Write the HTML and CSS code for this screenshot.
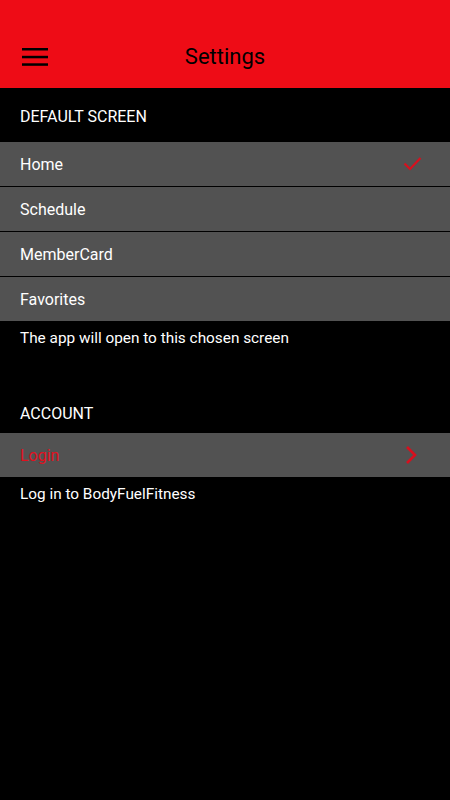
FILE: index.html
```html
<!DOCTYPE html>
<html>
<head>
<meta charset="utf-8">
<link rel="stylesheet" href="styles.css">
</head>
<body>
<div class="app">
  <header class="topbar">
    <div class="menu">
      <svg width="26" height="20" viewBox="0 0 26 20"><rect x="0" y="1" width="26" height="2.5" fill="#000"/><rect x="0" y="8.8" width="26" height="2.5" fill="#000"/><rect x="0" y="16.3" width="26" height="2.5" fill="#000"/></svg>
    </div>
    <div class="title">Settings</div>
  </header>
  <div class="section-title">DEFAULT SCREEN</div>
  <div class="list">
    <div class="row"><span>Home</span>
      <svg class="check" width="20" height="16" viewBox="0 0 20 16"><path d="M1.5 7.5 L7 13 L17.5 2" fill="none" stroke="#d8101e" stroke-width="2.2"/></svg>
    </div>
    <div class="row"><span>Schedule</span></div>
    <div class="row"><span>MemberCard</span></div>
    <div class="row"><span>Favorites</span></div>
  </div>
  <div class="note">The app will open to this chosen screen</div>
  <div class="section-title account">ACCOUNT</div>
  <div class="list">
    <div class="row login"><span>Login</span>
      <svg class="chev" width="14" height="20" viewBox="0 0 14 20"><path d="M2 2 L10 10 L2 18" fill="none" stroke="#d8101e" stroke-width="2.6"/></svg>
    </div>
  </div>
  <div class="note">Log in to BodyFuelFitness</div>
</div>
</body>
</html>
```
FILE: styles.css
```css
html, body {
  margin: 0;
  padding: 0;
  background: #000;
}
body {
  font-family: Roboto, "Noto Sans", sans-serif;
  color: #fff;
  width: 450px;
  height: 800px;
  overflow: hidden;
}
.topbar {
  height: 88px;
  background: #ee0c16;
  position: relative;
  display: flex;
  align-items: flex-end;
  justify-content: center;
  box-sizing: border-box;
  padding-bottom: 17px;
}
.menu {
  position: absolute;
  left: 22px;
  top: 47px;
  height: 20px;
}
.menu svg { display: block; }
.title {
  color: #000;
  font-size: 22px;
  line-height: 28px;
}
.section-title {
  font-size: 16px;
  line-height: 20px;
  padding: 19px 20px 15px 20px;
}
.section-title.account {
  padding-top: 0;
  margin-top: 56px;
  padding-bottom: 9px;
}
.list {
  display: flex;
  flex-direction: column;
}
.row {
  background: #525252;
  height: 44px;
  display: flex;
  align-items: center;
  justify-content: space-between;
  padding: 0 27px 0 20px;
  font-size: 16px;
  border-bottom: 1px solid #000;
}
.row:last-child { border-bottom: none; }
.row.login { color: #e0101e; padding-right: 31px; }
.note {
  font-size: 15.35px;
  line-height: 20px;
  padding: 7px 20px 0 20px;
}
```
